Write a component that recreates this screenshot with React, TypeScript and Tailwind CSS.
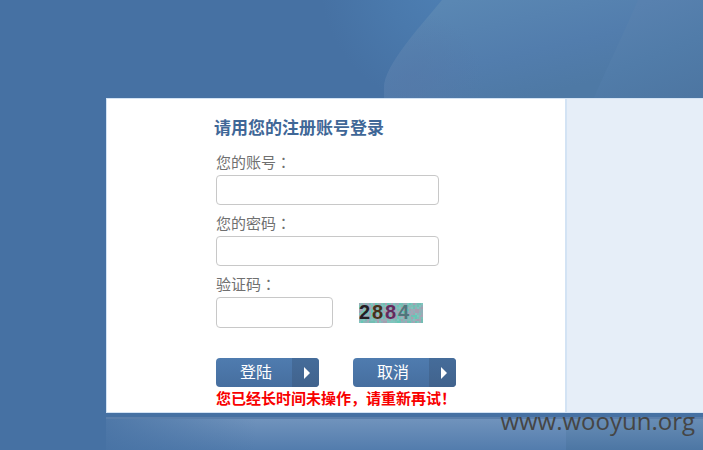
import type { ReactNode } from "react";

const noiseColors = ["#86b9b6", "#a6a3b5", "#7cc0b6", "#8fb0b8", "#74bdb3", "#a49fb0", "#7fc4bd", "#9aabb6", "#66c6b6"];

function Backdrop() {
  return (
    <svg
      className="pointer-events-none absolute top-0 left-0 -z-10"
      width="1000"
      height="98"
      viewBox="0 0 1000 98"
      aria-hidden="true"
    >
      <defs>
        <radialGradient id="glow" gradientUnits="userSpaceOnUse" cx="450" cy="-20" r="130">
          <stop offset="0" stopColor="#4e80b4" />
          <stop offset="0.5" stopColor="#4a79ac" />
          <stop offset="1" stopColor="#4671a3" />
        </radialGradient>
        <linearGradient id="leaf" gradientUnits="userSpaceOnUse" x1="500" y1="-10" x2="525" y2="98">
          <stop offset="0" stopColor="#5a87b3" />
          <stop offset="0.6" stopColor="#527dad" />
          <stop offset="1" stopColor="#4e79a5" />
        </linearGradient>
        <radialGradient id="edge" gradientUnits="userSpaceOnUse" cx="410" cy="85" r="75">
          <stop offset="0" stopColor="#5579a8" stopOpacity="0.7" />
          <stop offset="1" stopColor="#5579a8" stopOpacity="0" />
        </radialGradient>
        <linearGradient id="fold" gradientUnits="userSpaceOnUse" x1="650" y1="0" x2="690" y2="98">
          <stop offset="0" stopColor="#5881af" />
          <stop offset="0.5" stopColor="#517ca9" />
          <stop offset="1" stopColor="#4d76a2" />
        </linearGradient>
      </defs>
      <path d="M300 0H460V98H300Z" fill="url(#glow)" />
      <path d="M442 0C418 29 384 66 384 88V98H1000V0Z" fill="url(#leaf)" />
      <path d="M442 0C418 29 384 66 384 88V98H490V0Z" fill="url(#edge)" />
      <path d="M638 0C620 42 606 70 594 98H1000V0Z" fill="url(#fold)" />
    </svg>
  );
}

function Captcha() {
  const cells = [];
  let seed = 2884;
  for (let y = 0; y < 10; y++) {
    for (let x = 0; x < 32; x++) {
      seed = (seed * 16807) % 2147483647;
      cells.push(
        <rect key={x + "-" + y} x={x * 2} y={y * 2} width="2" height="2" fill={noiseColors[seed % noiseColors.length]} />,
      );
    }
  }
  return (
    <svg className="overflow-visible" width="64" height="20" viewBox="0 0 64 20" role="img" aria-label="验证码 2884">
      <g shapeRendering="crispEdges">{cells}</g>
      <text y="16" fontFamily="'Liberation Sans', sans-serif" fontWeight="700" fontSize="20">
        <tspan x="0" fill="#241c22">2</tspan>
        <tspan x="13" fill="#47301a">8</tspan>
        <tspan x="26" fill="#632a5d">8</tspan>
        <tspan x="39" fill="#50767b">4</tspan>
      </text>
    </svg>
  );
}

function FieldLabel({ htmlFor, children }: { htmlFor: string; children: ReactNode }) {
  return (
    <label htmlFor={htmlFor} className="block h-6 leading-[22px]">
      {children}
      <span className="font-['Noto_Sans_CJK_TC',sans-serif]">：</span>
    </label>
  );
}

function ArrowButton({ type, children }: { type: "submit" | "reset"; children: ReactNode }) {
  return (
    <button
      type={type}
      className="flex h-[29px] w-[103px] overflow-hidden rounded bg-linear-to-b from-[#4f7caf] to-[#466e9f] text-base text-white"
    >
      <span className="flex h-full flex-1 items-center justify-center pl-1">{children}</span>
      <span className="flex h-full w-[27px] items-center justify-center bg-linear-to-b from-[#456c9a] to-[#41638d] pl-0.5">
        <svg width="6" height="12" viewBox="0 0 6 12" aria-hidden="true">
          <path d="M0 0L6 6L0 12Z" fill="#fff" />
        </svg>
      </span>
    </button>
  );
}

const field = "block w-full rounded border border-[#c8c8c8] bg-white px-2 text-sm text-[#333] outline-none";

export default function App() {
  return (
    <div className="relative isolate min-h-screen overflow-hidden bg-[#4671a3] pt-[98px] pl-[106px] font-['Liberation_Sans','Noto_Sans_CJK_SC',sans-serif]">
      <Backdrop />
      <main className="flex border border-r-0 border-[#d3e3f4] bg-white">
        <section className="w-[460px] shrink-0 border-r-2 border-[#d3e3f4] pt-[18px] pb-px pl-[109px]">
          <h1 className="-ml-0.5 text-[17px] leading-6 font-bold text-[#3f6797]">请用您的注册账号登录</h1>
          <form className="mt-2.5 text-[15px] text-[#707070]" onSubmit={(e) => e.preventDefault()}>
            <div className="w-[223px]">
              <FieldLabel htmlFor="account">您的账号</FieldLabel>
              <input id="account" type="text" className={field + " h-[30px]"} />
            </div>
            <div className="mt-[7px] w-[223px]">
              <FieldLabel htmlFor="password">您的密码</FieldLabel>
              <input id="password" type="password" className={field + " h-[30px]"} />
            </div>
            <div className="mt-[7px]">
              <FieldLabel htmlFor="code">验证码</FieldLabel>
              <div className="flex items-center gap-[26px]">
                <div className="w-[117px]">
                  <input id="code" type="text" className={field + " h-[31px]"} />
                </div>
                <Captcha />
              </div>
            </div>
            <div className="mt-[30px] flex gap-[34px]">
              <ArrowButton type="submit">登陆</ArrowButton>
              <ArrowButton type="reset">取消</ArrowButton>
            </div>
            <p role="alert" className="leading-6 font-bold text-[#f80000]">您已经长时间未操作，请重新再试！</p>
          </form>
        </section>
        <aside className="flex-1 bg-[#e6eef8]" />
      </main>
      <div className="mt-1 flex h-10 border-t-2 border-[#5b7fab]" aria-hidden="true">
        <div className="w-[460px] shrink-0 bg-linear-to-b from-[#7093bc] to-[#4c77a9]">
          <div className="h-full w-[150px] bg-linear-to-r from-[#4671a3]/80 to-[#4671a3]/0" />
        </div>
        <div className="flex-1 bg-linear-to-b from-[#688db5] to-[#4671a0]" />
      </div>
      <p className="absolute right-2 bottom-5 font-['Open_Sans',sans-serif] text-2xl leading-8 text-[#454545]">www.wooyun.org</p>
    </div>
  );
}
